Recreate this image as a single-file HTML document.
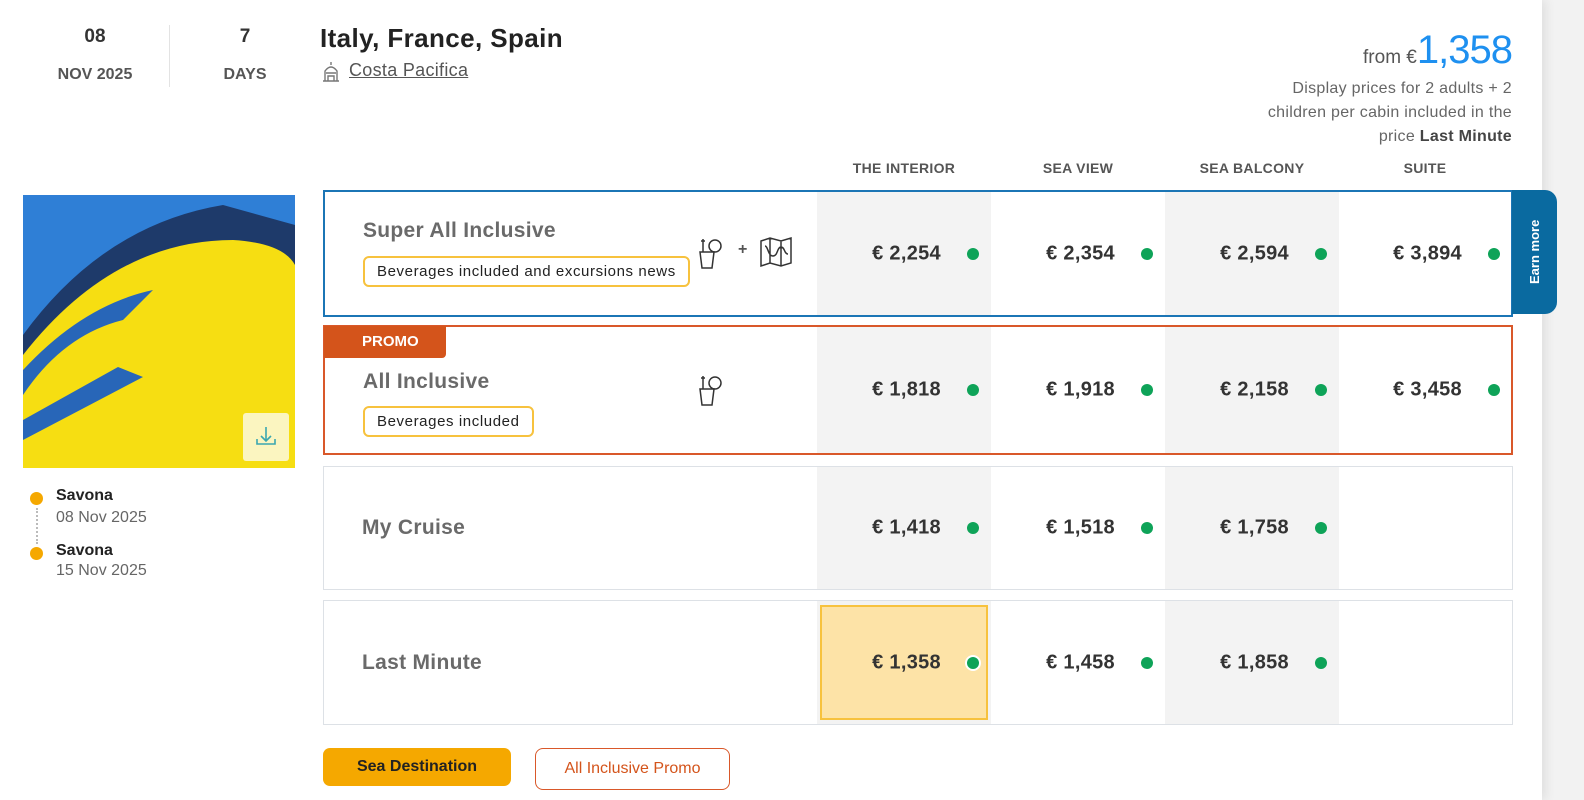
<!DOCTYPE html>
<html><head><meta charset="utf-8"><style>
*{box-sizing:border-box;margin:0;padding:0}
body{width:1584px;height:800px;overflow:hidden;background:#f2f2f2;font-family:"Liberation Sans",sans-serif;color:#333;position:relative}
.panel{position:absolute;left:0;top:0;width:1542px;height:800px;background:#fff;box-shadow:4px 0 10px rgba(0,0,0,.08)}
.a{position:absolute}
.b{font-weight:bold}
.row{position:absolute;left:323px;width:1190px;background:#fff;border:1px solid #dde1e6}
.cell{position:absolute;top:0;bottom:0;width:174px}
.g{background:#f3f3f3}
.p{position:absolute;right:50px;top:50%;transform:translateY(-50%);font-weight:bold;font-size:20px;color:#333;letter-spacing:.3px}
.dot{position:absolute;right:12px;top:50%;margin-top:-6px;width:12px;height:12px;border-radius:50%;background:#0ea358}
.name{position:absolute;left:38px;font-size:21px;font-weight:bold;color:#6a6a6a;letter-spacing:.3px}
.tag{position:absolute;left:38px;border:2px solid #f7c23e;border-radius:6px;font-size:15px;letter-spacing:.6px;color:#222;padding:0 12px;height:31px;line-height:27px}
.hd{position:absolute;top:160px;font-size:14px;font-weight:bold;color:#555;text-align:center;width:174px;letter-spacing:.3px}
</style></head><body>
<div class="panel"></div>
<div class="a b" style="left:0;width:190px;top:26px;text-align:center;font-size:19px;color:#333">08</div>
<div class="a b" style="left:0;width:190px;top:66px;text-align:center;font-size:16px;color:#555">NOV 2025</div>
<div class="a" style="left:169px;top:25px;width:1px;height:62px;background:#e3e3e3"></div>
<div class="a b" style="left:170px;width:150px;top:26px;text-align:center;font-size:19px;color:#333">7</div>
<div class="a b" style="left:170px;width:150px;top:66px;text-align:center;font-size:16px;color:#555">DAYS</div>
<div class="a b" style="left:320px;top:23px;font-size:26px;letter-spacing:.4px;color:#222">Italy, France, Spain</div>
<svg class="a" style="left:321px;top:61px" width="20" height="22" viewBox="0 0 20 22" fill="none" stroke="#777" stroke-width="1.4"><path d="M10 1v3M4 20V10q6-8 12 0v10M2 20h16M7 20v-5h6v5M5 12h10"/></svg>
<div class="a" style="left:349px;top:60px;font-size:18px;color:#555;text-decoration:underline;letter-spacing:.3px">Costa Pacifica</div>
<div class="a" style="right:72px;top:28px;font-size:19px;color:#555">from €<span style="font-size:40px;color:#1e90f0;letter-spacing:-1px">1,358</span></div>
<div class="a" style="right:72px;top:77px;width:400px;text-align:right;font-size:16px;line-height:24px;color:#666;letter-spacing:.3px;white-space:nowrap">Display prices for 2 adults + 2<br>children per cabin included in the<br>price <b style="color:#444">Last Minute</b></div>
<div class="hd" style="left:817px">THE INTERIOR</div>
<div class="hd" style="left:991px">SEA VIEW</div>
<div class="hd" style="left:1165px">SEA BALCONY</div>
<div class="hd" style="left:1338px">SUITE</div>

<svg class="a" style="left:23px;top:195px" width="272" height="273" viewBox="0 0 272 273">
<rect width="272" height="273" fill="#2f7fd6"/>
<path d="M0 140 Q80 30 200 10 L272 30 L272 273 L0 273Z" fill="#1e3a6a"/>
<path d="M0 160 Q90 45 210 45 Q260 48 272 70 L272 273 L0 273Z" fill="#f6de12"/>
<path d="M0 175 Q60 110 130 95 L100 125 Q40 140 0 200Z" fill="#2866b8"/>
<path d="M0 225 L95 172 L120 182 L0 245Z" fill="#2866b8"/>
<rect x="220" y="218" width="46" height="48" rx="3" fill="#fbf5c0"/>
<path d="M243 232v14m-5-5l5 5l5-5M234 244v5h18v-5" stroke="#3aa6b0" stroke-width="1.6" fill="none"/>
</svg>
<div class="a" style="left:30px;top:492px;width:13px;height:13px;border-radius:50%;background:#f5a800"></div>
<div class="a" style="left:36px;top:508px;height:36px;border-left:2px dotted #bbb"></div>
<div class="a" style="left:30px;top:547px;width:13px;height:13px;border-radius:50%;background:#f5a800"></div>
<div class="a b" style="left:56px;top:487px;font-size:16px;color:#222">Savona</div>
<div class="a" style="left:56px;top:509px;font-size:16px;color:#666">08 Nov 2025</div>
<div class="a b" style="left:56px;top:542px;font-size:16px;color:#222">Savona</div>
<div class="a" style="left:56px;top:562px;font-size:16px;color:#666">15 Nov 2025</div>

<!-- row 1 -->
<div class="row" style="top:190px;height:127px;border:2px solid #1b75b5">
 <div class="name" style="top:27px">Super All Inclusive</div>
 <div class="tag" style="top:64px">Beverages included and excursions news</div>
 <svg class="a" style="left:370px;top:44px" width="32" height="34" viewBox="0 0 32 34" fill="none" stroke="#333" stroke-width="1.5"><circle cx="20" cy="10" r="6"/><path d="M5 16h14l-2 16H7z M8 3v13M6 5h4"/></svg>
 <div class="a b" style="left:413px;top:49px;font-size:16px;color:#555">+</div>
 <svg class="a" style="left:434px;top:44px" width="34" height="32" viewBox="0 0 34 32" fill="none" stroke="#333" stroke-width="1.5"><path d="M2 5l9-3 11 3 10-3v25l-10 3-11-3-9 3z M11 2v25M22 5v25 M6 10c3 0 3 10 8 10s4-9 8-9 3 7 7 7"/></svg>
 <div class="cell g" style="left:492px"><span class="p">€ 2,254</span><span class="dot"></span></div>
 <div class="cell" style="left:666px"><span class="p">€ 2,354</span><span class="dot"></span></div>
 <div class="cell g" style="left:840px"><span class="p">€ 2,594</span><span class="dot"></span></div>
 <div class="cell" style="left:1013px"><span class="p">€ 3,894</span><span class="dot"></span></div>
</div>
<div class="a" style="left:1512px;top:190px;width:45px;height:124px;background:#0a6aa0;border-radius:0 12px 12px 0"></div>
<div class="a b" style="left:1512px;top:190px;width:45px;height:124px;color:#fff;font-size:13px;writing-mode:vertical-rl;transform:rotate(180deg);text-align:center;line-height:45px">Earn more</div>

<!-- row 2 -->
<div class="row" style="top:325px;height:130px;border:2px solid #d9582a">
 <div class="a b" style="left:-1px;top:-1px;width:122px;height:32px;background:#d4541b;color:#fff;font-size:15px;line-height:32px;padding-left:38px;border-radius:0 0 4px 0">PROMO</div>
 <div class="name" style="top:43px">All Inclusive</div>
 <div class="tag" style="top:79px">Beverages included</div>
 <svg class="a" style="left:370px;top:46px" width="32" height="34" viewBox="0 0 32 34" fill="none" stroke="#333" stroke-width="1.5"><circle cx="20" cy="10" r="6"/><path d="M5 16h14l-2 16H7z M8 3v13M6 5h4"/></svg>
 <div class="cell g" style="left:492px"><span class="p">€ 1,818</span><span class="dot"></span></div>
 <div class="cell" style="left:666px"><span class="p">€ 1,918</span><span class="dot"></span></div>
 <div class="cell g" style="left:840px"><span class="p">€ 2,158</span><span class="dot"></span></div>
 <div class="cell" style="left:1013px"><span class="p">€ 3,458</span><span class="dot"></span></div>
</div>

<!-- row 3 -->
<div class="row" style="top:466px;height:124px">
 <div class="name" style="top:49px">My Cruise</div>
 <div class="cell g" style="left:493px"><span class="p">€ 1,418</span><span class="dot"></span></div>
 <div class="cell" style="left:667px"><span class="p">€ 1,518</span><span class="dot"></span></div>
 <div class="cell g" style="left:841px"><span class="p">€ 1,758</span><span class="dot"></span></div>
</div>

<!-- row 4 -->
<div class="row" style="top:600px;height:125px">
 <div class="name" style="top:50px">Last Minute</div>
 <div class="cell g" style="left:493px"><div class="a" style="left:3px;right:3px;top:4px;bottom:4px;background:#fde3a7;border:2px solid #f7c23e"></div><span class="p">€ 1,358</span><span class="dot" style="box-shadow:0 0 0 2px #fff"></span></div>
 <div class="cell" style="left:667px"><span class="p">€ 1,458</span><span class="dot"></span></div>
 <div class="cell g" style="left:841px"><span class="p">€ 1,858</span><span class="dot"></span></div>
</div>

<div class="a b" style="left:323px;top:748px;width:188px;height:38px;background:#f5a800;border-radius:7px;text-align:center;line-height:38px;font-size:16px;color:#222">Sea Destination</div>
<div class="a" style="left:535px;top:748px;width:195px;height:42px;border:1.5px solid #d9582a;border-radius:8px;text-align:center;line-height:39px;font-size:16px;color:#d4541b">All Inclusive Promo</div>
</body></html>
